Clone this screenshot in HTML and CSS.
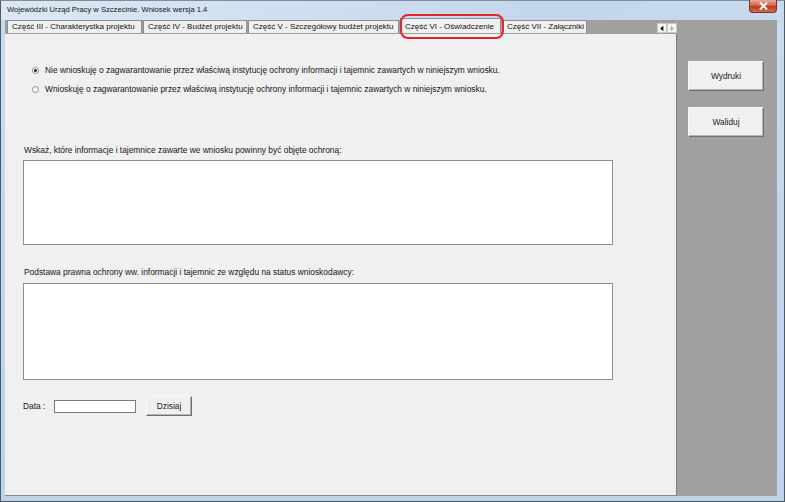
FILE: index.html
```html
<!DOCTYPE html>
<html lang="pl">
<head>
<meta charset="utf-8">
<title>Wniosek</title>
<link rel="stylesheet" href="styles.css">
</head>
<body>
<div class="window">
  <div class="titlebar">
    <span class="title">Wojewódzki Urząd Pracy w Szczecinie. Wniosek wersja 1.4</span>
    <div class="close">
      <svg width="9" height="8" viewBox="0 0 9 8"><path d="M1 0.5 L8 7.5 M8 0.5 L1 7.5" stroke="#fff" stroke-width="2"/></svg>
    </div>
  </div>
  <div class="client">
    <div class="main">
      <div class="tabstrip">
        <div class="tabs">
          <div class="tab t1">Część III - Charakterystka projektu</div>
          <div class="tab t2">Część IV - Budżet projektu</div>
          <div class="tab t3">Część V - Szczegółowy budżet projektu</div>
          <div class="tab active t4">Część VI - Oświadczenie<span class="mark"></span></div>
          <div class="tab t5">Część VII - Załączniki</div>
        </div>
        <div class="scroll">
          <span class="arrow"><svg width="9" height="9" viewBox="0 0 9 9"><path d="M6 1.5 L2.5 4.5 L6 7.5 Z" fill="#000"/></svg></span>
          <span class="arrow"><svg width="9" height="9" viewBox="0 0 9 9"><path d="M3 1.5 L6.5 4.5 L3 7.5 Z" fill="#a8a8a8"/></svg></span>
        </div>
      </div>
      <div class="page">
        <div class="radios">
          <label class="radio"><span class="dot checked"></span>Nie wnioskuję o zagwarantowanie przez właściwą instytucję ochrony informacji i tajemnic zawartych w niniejszym wniosku.</label>
          <label class="radio"><span class="dot"></span>Wnioskuję o zagwarantowanie przez właściwą instytucję ochrony informacji i tajemnic zawartych w niniejszym wniosku.</label>
        </div>
        <div class="field first">
          <div class="flabel">Wskaż, które informacje i tajemnice zawarte we wniosku powinny być objęte ochroną:</div>
          <div class="area a1"></div>
        </div>
        <div class="field second">
          <div class="flabel">Podstawa prawna ochrony ww. informacji i tajemnic ze względu na status wnioskodawcy:</div>
          <div class="area a2"></div>
        </div>
        <div class="daterow">
          <span class="dlabel">Data :</span>
          <span class="dinput"></span>
          <span class="btn small">Dzisiaj</span>
        </div>
      </div>
    </div>
    <div class="side">
      <span class="btn big">Wydruki</span>
      <span class="btn big">Waliduj</span>
    </div>
  </div>
</div>
</body>
</html>
```

FILE: styles.css
```css
* { box-sizing: border-box; }
html, body { margin: 0; padding: 0; background: #fff; }
body {
  font-family: "Liberation Sans", Arial, sans-serif;
  font-size: 8.4px;
  color: #151515;
}
.window {
  width: 785px;
  height: 502px;
  border: 1px solid #4d5a66;
  border-top-color: #7f8d9b;
  background: linear-gradient(to bottom, #c9dbee, #bcd3ea);
  display: flex;
  flex-direction: column;
}
.titlebar {
  height: 19px;
  display: flex;
  align-items: center;
  justify-content: space-between;
  background: linear-gradient(to right, #dce7f3 0%, #cfdff0 40%, #c3d6ec 70%, #c8daee 100%);
  padding-left: 6px;
}
.title {
  font-size: 7.6px;
  color: #111;
  line-height: 10px;
  margin-top: -1px;
}
.close {
  align-self: flex-start;
  width: 28px;
  height: 13px;
  margin-right: 7px;
  margin-top: -1px;
  border: 1px solid #7b3026;
  border-top: none;
  border-radius: 0 0 4px 4px;
  background: linear-gradient(to bottom, #e9a99c 0%, #d4634f 45%, #c0391f 55%, #d5694f 100%);
  display: flex;
  align-items: center;
  justify-content: center;
}
.client {
  flex: 1;
  margin: 0 7px 5px 4px;
  background: #a0a0a0;
  display: flex;
}
.main {
  width: 672px;
  display: flex;
  flex-direction: column;
}
.tabstrip {
  height: 14px;
  display: flex;
  justify-content: space-between;
  align-items: flex-start;
  padding-left: 2px;
}
.tabs {
  display: flex;
  align-items: flex-start;
}
.tab {
  height: 13px;
  line-height: 12px;
  font-size: 8px;
  background: #f0f0f0;
  border: 1px solid #8d8d8d;
  border-bottom: none;
  padding: 0 2px 0 4px;
  white-space: nowrap;
  color: #111;
  margin-right: 1px;
  flex: none;
}
.t1 { min-width: 135px; }
.t2 { min-width: 104px; }
.t3 { min-width: 151px; }
.t4 { min-width: 101px; }
.t5 { min-width: 82px; }
.tab.active {
  position: relative;
  height: 15px;
  margin-top: -2px;
  line-height: 15px;
  z-index: 2;
  padding-left: 4px;
}
.mark {
  position: absolute;
  left: -1px;
  top: -5px;
  right: -4px;
  bottom: -6px;
  border: 2px solid #e3262d;
  border-radius: 8px;
}
.scroll {
  display: flex;
  margin-top: 3px;
  margin-right: 0;
}
.arrow {
  width: 10px;
  height: 10px;
  background: #f4f4f4;
  border: 1px solid #c8c8c8;
  display: flex;
  align-items: center;
  justify-content: center;
}
.page {
  flex: 1;
  background: #f0f0f0;
  border-right: 1px solid #7c7c7c;
  border-bottom: 1px solid #8a8a8a;
  padding-left: 18px;
}
.radios {
  margin-top: 31px;
  padding-left: 9px;
  display: flex;
  flex-direction: column;
  gap: 8px;
}
.radio {
  display: flex;
  align-items: center;
  height: 11px;
  line-height: 11px;
  white-space: nowrap;
}
.dot {
  width: 7px;
  height: 7px;
  border-radius: 50%;
  border: 1px solid #8a8a8a;
  background: #fbfbfb;
  margin-right: 6px;
  display: flex;
  align-items: center;
  justify-content: center;
}
.dot.checked::after {
  content: "";
  width: 3px;
  height: 3px;
  border-radius: 50%;
  background: #222;
}
.field { display: flex; flex-direction: column; }
.field.first { margin-top: 50px; }
.field.second { margin-top: 22px; }
.flabel {
  height: 11px;
  line-height: 11px;
  padding-left: 1px;
  white-space: nowrap;
}
.area {
  width: 590px;
  background: #fff;
  border: 1px solid #8f8f8f;
}
.a1 { height: 85px; margin-top: 4px; }
.a2 { height: 97px; margin-top: 5px; }
.daterow {
  margin-top: 16px;
  display: flex;
  align-items: center;
  height: 20px;
}
.dlabel { width: 31px; line-height: 11px; }
.dinput {
  width: 82px;
  height: 13px;
  background: #fff;
  border: 1px solid #7a7a7a;
  margin-right: 10px;
}
.btn {
  display: flex;
  align-items: center;
  justify-content: center;
  background: #f0f0f0;
  border: 1px solid #6f6f6f;
  border-top-color: #f8f8f8;
  border-left-color: #f8f8f8;
  box-shadow: inset -1px -1px 0 #b4b4b4;
  color: #222;
}
.btn.small { width: 46px; height: 20px; }
.side {
  flex: 1;
  display: flex;
  flex-direction: column;
  padding: 41px 0 0 11px;
  gap: 16px;
}
.btn.big { width: 76px; height: 30px; }
```
